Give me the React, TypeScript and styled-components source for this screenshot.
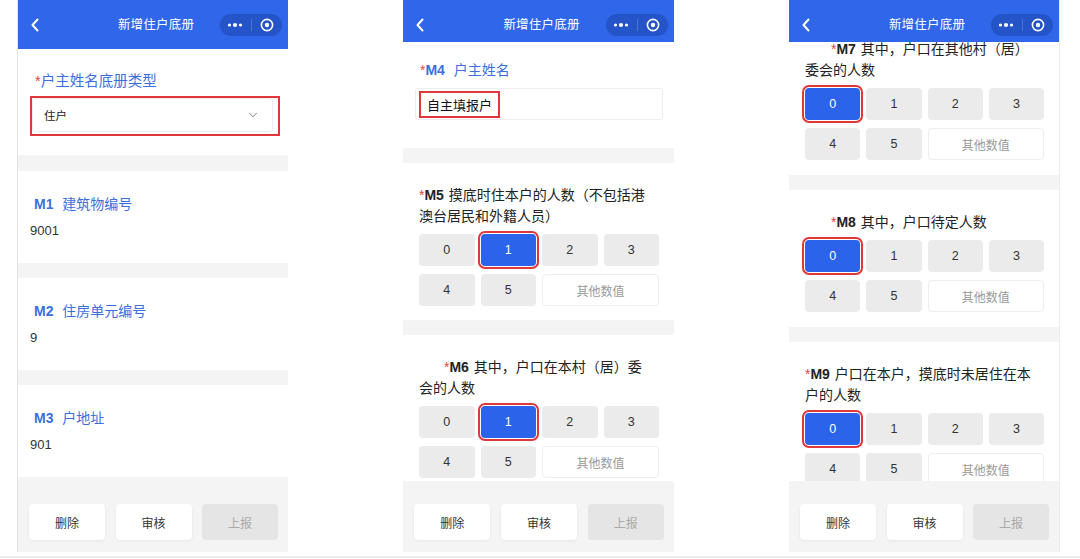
import React from "react";
import styled, { createGlobalStyle } from "styled-components";
import { ChevronDown } from "lucide-react";

const GlobalStyle = createGlobalStyle`
  html, body { margin: 0; padding: 0; background: #fff; }
  body {
    font-family: "Liberation Sans", "Noto Sans CJK SC", sans-serif;
    color: #222;
  }
  * { box-sizing: border-box; }
`;

const Page = styled.div`
  display: flex;
  align-items: flex-start;
  gap: 115px;
  padding-left: 17px;
  height: 558px;
  border-bottom: 2px solid #ebebeb;
  background: #fff;
`;

const Phone = styled.div<{ $edge?: "left" | "right" }>`
  width: 271px;
  height: 552px;
  display: flex;
  flex-direction: column;
  overflow: hidden;
  background: #fff;
  border-left: ${(p) => (p.$edge === "left" ? "1px solid #e4e4e4" : "none")};
  border-right: ${(p) => (p.$edge === "right" ? "1px solid #ececec" : "none")};
`;

const NavBar = styled.header<{ $h: number }>`
  flex-shrink: 0;
  height: ${(p) => p.$h}px;
  background: #2f66ea;
  display: grid;
  grid-template-columns: 1fr auto 1fr;
  align-items: start;
  padding: 14px 6px 0 12px;
  color: #fff;
  position: relative;
  z-index: 1;
`;

const Back = styled.svg`
  width: 10px;
  height: 22px;
`;

const NavTitle = styled.div`
  font-size: 12.5px;
  line-height: 22px;
  letter-spacing: 0.2px;
`;

const Capsule = styled.div`
  justify-self: end;
  width: 62px;
  height: 22px;
  border-radius: 11px;
  background: #2553c8;
  display: grid;
  grid-template-columns: 1fr 1px 1fr;
  align-items: center;
`;

const CapsuleDivider = styled.span`
  height: 12px;
  background: rgba(255, 255, 255, 0.18);
`;

const CapsuleIcon = styled.svg`
  justify-self: center;
`;

const Body = styled.main`
  flex: 1;
  overflow: hidden;
  background: #f4f4f4;
`;

const Scroll = styled.div<{ $offset: number }>`
  margin-top: ${(p) => -p.$offset}px;
`;

const Card = styled.div<{ $pad: string }>`
  background: #fff;
  padding: ${(p) => p.$pad};
`;

const Gap = styled.div<{ $h: number }>`
  height: ${(p) => p.$h}px;
`;

const Label = styled.div<{ $tone: "blue" | "dark"; $size?: number; $lh?: number; $inset?: number; $indent?: number }>`
  color: ${(p) => (p.$tone === "blue" ? "#3b6fe0" : "#222")};
  font-size: ${(p) => p.$size ?? 14}px;
  line-height: ${(p) => p.$lh ?? 21}px;
  padding-left: ${(p) => p.$inset ?? 0}px;
  text-indent: ${(p) => p.$indent ?? 0}px;
  white-space: pre-line;
`;

const Req = styled.span`
  color: #e6453e;
`;

const Code = styled.span`
  font-weight: 700;
  margin-right: 1px;
`;

const Value = styled.div`
  margin-top: 8px;
  font-size: 13px;
  line-height: 18px;
  color: #333;
`;

const SelectFrame = styled.div`
  margin-top: 5px;
  height: 40px;
  border: 2px solid #e0383a;
  padding: 0 5px 2px 0;
`;

const Select = styled.div`
  height: 100%;
  border: 1px solid #ececec;
  border-radius: 3px;
  display: flex;
  align-items: center;
  justify-content: space-between;
  padding: 0 12px 0 11px;
  font-size: 11.5px;
  color: #222;
`;

const TextBox = styled.div`
  margin-top: 7px;
  height: 32px;
  border: 1px solid #ededed;
  border-radius: 3px;
  padding: 1px 3px;
  display: flex;
  align-items: center;
`;

const Flag = styled.span`
  border: 2px solid #e0383a;
  height: 27px;
  padding: 0 6px;
  display: flex;
  align-items: center;
  font-size: 13px;
  color: #111;
`;

const OptionGrid = styled.div`
  margin-top: 7px;
  display: grid;
  grid-template-columns: repeat(4, 1fr);
  grid-auto-rows: 32px;
  gap: 8px 6px;
`;

const Option = styled.div<{ $active?: boolean; $wide?: boolean; $flagged?: boolean }>`
  grid-column: span ${(p) => (p.$wide ? 2 : 1)};
  display: flex;
  align-items: center;
  justify-content: center;
  border-radius: 4px;
  font-size: ${(p) => (p.$wide ? 12 : 12.5)}px;
  background: ${(p) => (p.$active ? "#2b63ea" : p.$wide ? "#fff" : "#ebebeb")};
  color: ${(p) => (p.$active ? "#fff" : p.$wide ? "#9a9a9a" : "#333")};
  border: ${(p) => (p.$wide ? "1px solid #eeeeee" : "none")};
  outline: ${(p) => (p.$flagged ? "2px solid #e0383a" : "none")};
  outline-offset: 1px;
`;

const Footer = styled.footer`
  flex-shrink: 0;
  background: #f4f4f4;
  display: flex;
  gap: 10.5px;
  padding: 23px 10px 12px 11px;
`;

const Action = styled.button<{ $disabled?: boolean }>`
  flex: 1;
  height: 36px;
  border: none;
  border-radius: 4px;
  font-family: inherit;
  font-size: 12px;
  background: ${(p) => (p.$disabled ? "#e5e5e5" : "#fff")};
  color: ${(p) => (p.$disabled ? "#a9a9a9" : "#333")};
  box-shadow: ${(p) => (p.$disabled ? "none" : "0 1px 3px rgba(0,0,0,0.06)")};
`;

const Nav = ({ h }: { h: number }) => (
  <NavBar $h={h}>
    <Back viewBox="0 0 10 22">
      <path d="M7.5 5.5 L2.5 11 L7.5 16.5" fill="none" stroke="#fff" strokeWidth="2" strokeLinecap="round" strokeLinejoin="round" />
    </Back>
    <NavTitle>新增住户底册</NavTitle>
    <Capsule>
      <CapsuleIcon width="16" height="6" viewBox="0 0 16 6">
        <circle cx="2.5" cy="3" r="1.6" fill="#fff" />
        <circle cx="8" cy="3" r="2.1" fill="#fff" />
        <circle cx="13.5" cy="3" r="1.6" fill="#fff" />
      </CapsuleIcon>
      <CapsuleDivider />
      <CapsuleIcon width="14" height="14" viewBox="0 0 14 14">
        <circle cx="7" cy="7" r="5.6" fill="none" stroke="#fff" strokeWidth="1.6" />
        <circle cx="7" cy="7" r="2.2" fill="#fff" />
      </CapsuleIcon>
    </Capsule>
  </NavBar>
);

const Actions = () => (
  <Footer>
    <Action>删除</Action>
    <Action>审核</Action>
    <Action $disabled>上报</Action>
  </Footer>
);

type Question = { code: string; text: string; selected: number; indent?: number };

const CountQuestion = ({ q, pad }: { q: Question; pad: string }) => (
  <Card $pad={pad}>
    <Label $tone="dark" $indent={q.indent}>
      <Req>*</Req>
      <Code>{q.code}</Code> {q.text}
    </Label>
    <OptionGrid>
      {[0, 1, 2, 3, 4, 5].map((n) => (
        <Option key={n} $active={n === q.selected} $flagged={n === q.selected}>
          {n}
        </Option>
      ))}
      <Option $wide>其他数值</Option>
    </OptionGrid>
  </Card>
);

const infoFields = [
  { code: "M1", name: "建筑物编号", value: "9001" },
  { code: "M2", name: "住房单元编号", value: "9" },
  { code: "M3", name: "户地址", value: "901" },
];

const page2: Question[] = [
  { code: "M5", text: "摸底时住本户的人数（不包括港\n澳台居民和外籍人员）", selected: 1 },
  { code: "M6", text: "其中，户口在本村（居）委\n会的人数", selected: 1, indent: 25 },
];

const page3: Question[] = [
  { code: "M7", text: "其中，户口在其他村（居）\n委会的人数", selected: 0, indent: 26 },
  { code: "M8", text: "其中，户口待定人数", selected: 0, indent: 26 },
  { code: "M9", text: "户口在本户，摸底时未居住在本\n户的人数", selected: 0 },
];

export default function App() {
  return (
    <>
      <GlobalStyle />
      <Page>
        <Phone $edge="left">
          <Nav h={49} />
          <Body>
            <Card $pad="22px 8px 19px 12px">
              <Label $tone="blue" $size={14.5} $lh={20} $inset={5}>
                <Req>*</Req>户主姓名底册类型
              </Label>
              <SelectFrame>
                <Select>
                  住户
                  <ChevronDown size={14} strokeWidth={1.4} color="#666" />
                </Select>
              </SelectFrame>
            </Card>
            {infoFields.map((f, i) => (
              <React.Fragment key={f.code}>
                <Gap $h={i === 0 ? 16 : 15} />
                <Card $pad="23px 12px">
                  <Label $tone="blue" $lh={20} $inset={4}>
                    <Code>{f.code}</Code>&nbsp; {f.name}
                  </Label>
                  <Value>{f.value}</Value>
                </Card>
              </React.Fragment>
            ))}
          </Body>
          <Actions />
        </Phone>

        <Phone>
          <Nav h={42} />
          <Body>
            <Card $pad="18px 11px 28px 12px">
              <Label $tone="blue" $inset={5}>
                <Req>*</Req>
                <Code>M4</Code>&nbsp; 户主姓名
              </Label>
              <TextBox>
                <Flag>自主填报户</Flag>
              </TextBox>
            </Card>
            <Gap $h={15} />
            <CountQuestion q={page2[0]} pad="22px 15px 14px 16px" />
            <Gap $h={15} />
            <CountQuestion q={page2[1]} pad="22px 15px 15px 16px" />
          </Body>
          <Actions />
        </Phone>

        <Phone $edge="right">
          <Nav h={42} />
          <Body>
            <Scroll $offset={25}>
              {page3.map((q, i) => (
                <React.Fragment key={q.code}>
                  {i > 0 && <Gap $h={15} />}
                  <CountQuestion q={q} pad="22px 15px 15px 16px" />
                </React.Fragment>
              ))}
            </Scroll>
          </Body>
          <Actions />
        </Phone>
      </Page>
    </>
  );
}
